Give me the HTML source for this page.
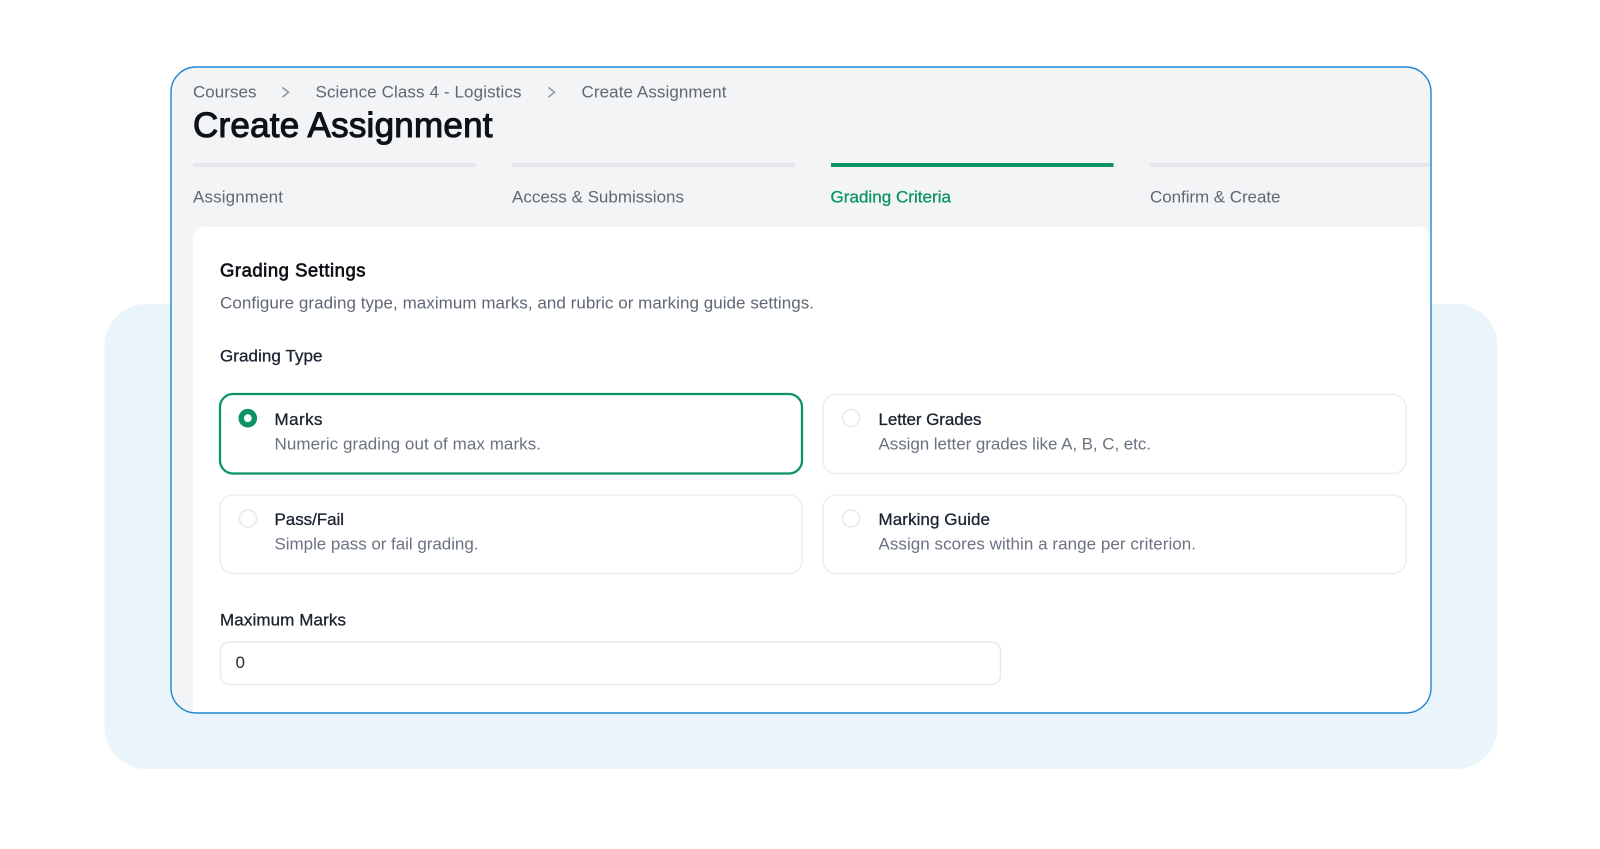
<!DOCTYPE html>
<html lang="en">
<head>
<meta charset="utf-8">
<title>Create Assignment</title>
<style>
html,body{margin:0;padding:0;width:1600px;height:849px;background:#fff;overflow:hidden}
svg{display:block}
text{font-family:"Liberation Sans",Arial,sans-serif;font-size:17px;white-space:pre}
.t{filter:blur(.3px)}
.g{fill:#5f6875}
.d{fill:#6b7280}
.l{fill:#1b2430;stroke:#1b2430;stroke-width:.3px}
</style>
</head>
<body>
<svg width="1600" height="849" viewBox="0 0 1600 849" xmlns="http://www.w3.org/2000/svg">
<defs>
<clipPath id="c"><rect x="171" y="67" width="1260" height="646" rx="25"/></clipPath>
</defs>
<rect x="104.500" y="304" width="1393" height="465" rx="42" fill="#e9f4fb"/>
<rect x="171" y="67" width="1260" height="646" rx="25" fill="#f3f4f6"/>
<g clip-path="url(#c)">
<rect x="193" y="227" width="1237.500" height="500" rx="12" fill="#fff"/>
<rect x="193" y="163" width="282.500" height="4" fill="#e5e7eb"/>
<rect x="512" y="163" width="283" height="4" fill="#e5e7eb"/>
<rect x="831" y="163" width="282.500" height="4" fill="#0c9465"/>
<rect x="1150" y="163" width="285" height="4" fill="#e5e7eb"/>
</g>
<rect x="171" y="67" width="1260" height="646" rx="25" fill="none" stroke="#2185d0" stroke-width="1.400"/>

<rect x="220" y="394" width="582" height="79.500" rx="13" fill="#fff" stroke="#0c9465" stroke-width="2.300"/>
<rect x="823" y="394.500" width="583" height="79" rx="13" fill="#fff" stroke="#eceef1" stroke-width="1.500"/>
<rect x="220" y="495" width="582" height="78.500" rx="13" fill="#fff" stroke="#eceef1" stroke-width="1.500"/>
<rect x="823" y="495" width="583" height="78.500" rx="13" fill="#fff" stroke="#eceef1" stroke-width="1.500"/>
<rect x="220.500" y="642" width="780" height="42.500" rx="9" fill="#fff" stroke="#e8e9ed" stroke-width="1.500"/>

<circle cx="247.800" cy="418.200" r="6.600" fill="#fff" stroke="#0c9465" stroke-width="5.400"/>
<circle cx="851" cy="418" r="8.500" fill="#fff" stroke="#e8e9ed" stroke-width="1.500"/>
<circle cx="248" cy="518.500" r="8.500" fill="#fff" stroke="#e8e9ed" stroke-width="1.500"/>
<circle cx="851" cy="518.500" r="8.500" fill="#fff" stroke="#e8e9ed" stroke-width="1.500"/>

<path d="M282.500 87.500l6 4.800-6 4.800" fill="none" stroke="#8b929c" stroke-width="1.500"/>
<path d="M548.500 87.500l6 4.800-6 4.800" fill="none" stroke="#8b929c" stroke-width="1.500"/>

<g class="t">
<text x="193" y="97.700" class="g" textLength="63.500">Courses</text>
<text x="315.500" y="97.700" class="g" textLength="206">Science Class 4 - Logistics</text>
<text x="581.500" y="97.700" class="g" textLength="145">Create Assignment</text>

<text x="193" y="137" style="font-size:35px" fill="#0e1217" stroke="#0e1217" stroke-width="1.050" textLength="299.500">Create Assignment</text>

<text x="193" y="202.300" class="g" textLength="90">Assignment</text>
<text x="512" y="202.300" class="g" textLength="172">Access &amp; Submissions</text>
<text x="830.500" y="202.300" fill="#0c9465" stroke="#0c9465" stroke-width=".3" textLength="120.500">Grading Criteria</text>
<text x="1150" y="202.300" class="g" textLength="130.500">Confirm &amp; Create</text>

<text x="220" y="276.500" style="font-size:18.500px" fill="#0e1217" stroke="#0e1217" stroke-width=".65" textLength="145.500">Grading Settings</text>
<text x="220" y="308.300" class="g" textLength="594">Configure grading type, maximum marks, and rubric or marking guide settings.</text>
<text x="220" y="361.700" class="l" textLength="102.500">Grading Type</text>

<text x="274.500" y="425.200" class="l" textLength="48">Marks</text>
<text x="274.500" y="449.700" class="d" textLength="266.500">Numeric grading out of max marks.</text>
<text x="878.500" y="425.200" class="l" textLength="103">Letter Grades</text>
<text x="878.500" y="449.700" class="d" textLength="272.500">Assign letter grades like A, B, C, etc.</text>
<text x="274.500" y="525.200" class="l" textLength="69.500">Pass/Fail</text>
<text x="274.500" y="549.700" class="d" textLength="204">Simple pass or fail grading.</text>
<text x="878.500" y="525.200" class="l" textLength="111.500">Marking Guide</text>
<text x="878.500" y="549.700" class="d" textLength="317.500">Assign scores within a range per criterion.</text>

<text x="220" y="625.500" class="l" textLength="126">Maximum Marks</text>
<text x="235.500" y="668" fill="#1f2937">0</text>
</g>
</svg>
</body>
</html>
